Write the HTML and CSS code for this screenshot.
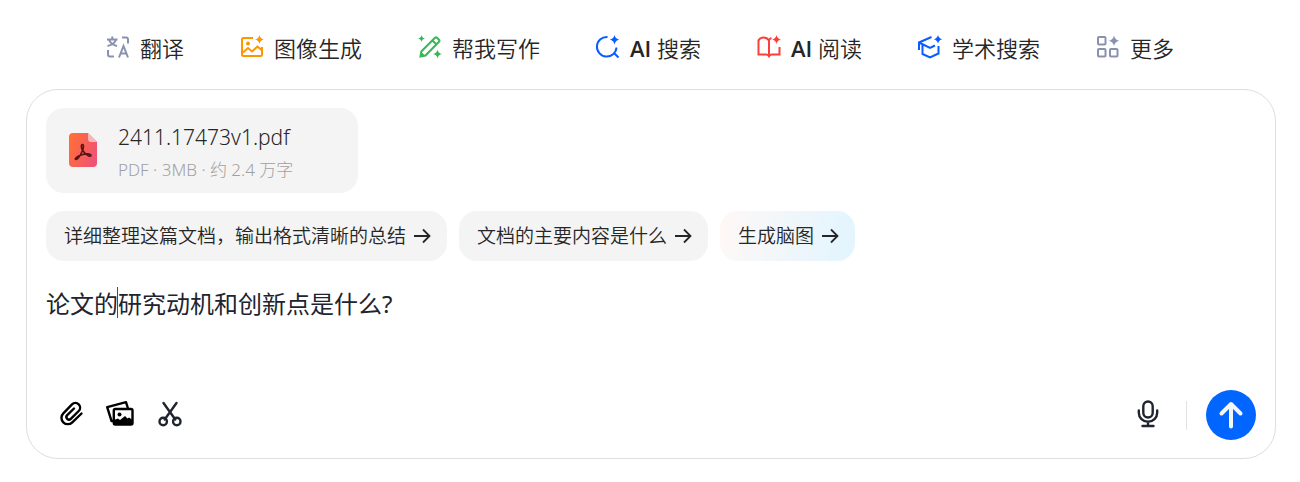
FILE: index.html
```html
<!DOCTYPE html>
<html lang="zh-CN">
<head>
<meta charset="utf-8">
<meta name="viewport" content="width=device-width, initial-scale=1">
<title>AI 助手</title>
<link rel="stylesheet" href="styles.css">
</head>
<body>
<main class="page">
  <nav class="skills" aria-label="技能">
    <button class="skill" type="button">
      <svg class="skill-icon gray" viewBox="0 0 24 24"><path d="M1 4.500h10.500M6.300 1.500v3M3 4.500c1 3.500 4 5.500 8 6.500M10 4.500c-1 3.500-4 5.500-8.500 6.500M16 2.500h4q2 0 2 2v4M2 15v4.500q0 2 2 2h4M13 22.500l4.500-11.500L22 22.500M15 18.500h5.500"/></svg>
      <span>翻译</span>
    </button>
    <button class="skill" type="button">
      <svg class="skill-icon orange" viewBox="0 0 24 24"><path d="M13 3H3.500Q2 3 2 4.500v15Q2 21 3.500 21h17q1.500 0 1.500-1.500V12M3 17.500l5-4.500 4 3.500 5.500-5 4 3.500"/><circle class="solid" cx="8" cy="8.500" r="2"/><path class="solid" d="M19.500 0q.8 3.700 4.500 4.500-3.700.8-4.500 4.500-.8-3.700-4.500-4.500 3.700-.8 4.500-4.500z"/></svg>
      <span>图像生成</span>
    </button>
    <button class="skill" type="button">
      <svg class="skill-icon green" viewBox="0 0 24 24"><path d="M2.500 21.500l.8-5L17 2.800q1-1 2 0l2 2q1 1 0 2L7.500 20.500zM14.500 5.500l4 4"/><path class="solid" d="M2.300 21.700l.8-5 4.200 4zM3.500 0q.5 3 3.500 3.500Q4 4 3.500 7 3 4 0 3.500 3 3 3.500 0zM19.500 14.500q.6 3.900 4.500 4.500-3.900.6-4.500 4.500-.6-3.900-4.500-4.500 3.900-.6 4.500-4.500z"/></svg>
      <span>帮我写作</span>
    </button>
    <button class="skill" type="button">
      <svg class="skill-icon blue" viewBox="0 0 24 24"><path d="M11.500 2a9.800 9.800 0 1 0 9 10.500M17.500 17.500l5 5"/><path class="solid" d="M18.500 0q.8 3.900 4.700 4.700-3.900.8-4.700 4.700-.8-3.900-4.700-4.700 3.900-.8 4.700-4.700z"/></svg>
      <span><b>AI</b> 搜索</span>
    </button>
    <button class="skill" type="button">
      <svg class="skill-icon red" viewBox="0 0 24 24"><path d="M12 20.500V5.500Q10 2.500 6.500 2.500T1.500 5.500V19.500h7.500q2 0 3 1.800 1-1.800 3-1.800h7.500V12M12 5q1-1.500 2.500-2"/><path class="solid" d="M19.500 0q.8 3.700 4.500 4.500-3.700.8-4.500 4.500-.8-3.700-4.500-4.500 3.700-.8 4.500-4.500z"/></svg>
      <span><b>AI</b> 阅读</span>
    </button>
    <button class="skill" type="button">
      <svg class="skill-icon blue" viewBox="0 0 24 24"><path d="M13.500 2L1 7.500V15M1 7.500L12 13l5-2.500M4.500 10v9l7.500 3.500 8.500-4V11"/><path class="solid" d="M20 0q.8 3.500 4.300 4.300-3.500.8-4.300 4.300-.8-3.500-4.300-4.300Q19.200 3.500 20 0z"/></svg>
      <span>学术搜索</span>
    </button>
    <button class="skill" type="button">
      <svg class="skill-icon gray" viewBox="0 0 24 24"><rect x="2" y="2" width="7.500" height="7.500" rx="1"/><rect x="2" y="14" width="7.500" height="7.500" rx="1"/><rect x="14" y="14" width="7.500" height="7.500" rx="1"/><path class="solid" d="M18 .5q.9 4.400 5.300 5.300-4.400.9-5.300 5.300-.9-4.400-5.300-5.300Q17.100 4.900 18 .5z"/></svg>
      <span>更多</span>
    </button>
  </nav>

  <form class="composer">
    <div class="file">
      <svg class="file-icon" viewBox="0 0 28 34">
        <defs><linearGradient id="pdf" x1="0" y1="0.3" x2="1" y2="0.7"><stop offset="0" stop-color="#ff6e38"/><stop offset="1" stop-color="#ef5377"/></linearGradient></defs>
        <path d="M4 0h15l9 9v21q0 4-4 4H4q-4 0-4-4V4q0-4 4-4z" fill="url(#pdf)"/>
        <path d="M19 0l9 9h-6q-3 0-3-3z" fill="#fbb5b4"/>
        <path d="M13.700 17.500c-1.700-3-1.800-6-.3-6s1.400 3-.1 6.500c-2 4.500-4.500 8.500-6.300 8.500s0-2.700 4.500-4.300c4-1.500 10.500-2 10.500 0s-4.500.8-8.300-4.700z" fill="none" stroke="#5b1414" stroke-width="1.600" stroke-linejoin="round"/>
      </svg>
      <div class="file-text">
        <div class="file-name">2411.17473v1.pdf</div>
        <div class="file-meta">PDF · 3MB · 约 2.4 万字</div>
      </div>
    </div>

    <div class="prompts">
      <button class="prompt" type="button">详细整理这篇文档，输出格式清晰的总结
        <svg class="arrow" viewBox="0 0 18 18"><path d="M1 9h15.500M10 2.500L16.500 9 10 15.500"/></svg></button>
      <button class="prompt" type="button">文档的主要内容是什么
        <svg class="arrow" viewBox="0 0 18 18"><path d="M1 9h15.500M10 2.500L16.500 9 10 15.500"/></svg></button>
      <button class="prompt mindmap" type="button">生成脑图
        <svg class="arrow" viewBox="0 0 18 18"><path d="M1 9h15.500M10 2.500L16.500 9 10 15.500"/></svg></button>
    </div>

    <div class="field">
      <textarea class="message" rows="2" aria-label="输入消息">论文的研究动机和创新点是什么?</textarea>
      <span class="caret"></span>
    </div>

    <div class="toolbar">
      <button class="tool" type="button" aria-label="添加附件">
        <svg class="tool-icon" viewBox="0 0 28 28"><path d="M24.500 13.500L15.300 22.300a6.300 6.300 0 0 1-9-9L15 4.300a4.700 4.700 0 0 1 6.700 6.700L13.800 18.800a2.500 2.500 0 0 1-3.600-3.600L17 8.500"/></svg>
      </button>
      <button class="tool" type="button" aria-label="添加图片">
        <svg class="tool-icon" viewBox="0 0 28 28"><path d="M5.500 21L1.200 7.200 20 2.200 21.700 7.500M5.500 21H7"/><rect x="7.800" y="9" width="18.700" height="15.500" rx="1.500"/><circle class="solid" cx="13.500" cy="14.500" r="2"/><path class="solid" d="M8 20l4-1.500 2 1.500 5-4 2.500 2.500 1.500-1 3.500 2.500v5H8z"/></svg>
      </button>
      <button class="tool" type="button" aria-label="截图">
        <svg class="tool-icon dark" viewBox="0 0 28 28"><path d="M7.500 3l11.800 16.500M20.500 3L8.700 19.500"/><circle cx="7.200" cy="21.500" r="3.700"/><circle cx="20.800" cy="21.500" r="3.700"/></svg>
      </button>
      <button class="tool mic" type="button" aria-label="语音输入">
        <svg class="tool-icon dark" viewBox="0 0 28 28"><rect x="9.300" y="1.500" width="9.400" height="16" rx="4.700"/><path d="M4.800 10.500v2.300a9.200 9 0 0 0 18.400 0v-2.300M14 21.800v4M8.500 26h11"/></svg>
      </button>
      <span class="divider"></span>
      <button class="send" type="submit" aria-label="发送">
        <svg class="send-icon" viewBox="0 0 28 28"><path d="M14 25.500V3M4.500 12.500L14 3l9.500 9.500"/></svg>
      </button>
    </div>
  </form>
</main>
</body>
</html>
```
FILE: styles.css
```css
* {
  box-sizing: border-box;
}

body {
  margin: 0;
  background: #fff;
  color: #262626;
  font-family: "Noto Sans", "Noto Sans CJK SC", sans-serif;
}

button {
  padding: 0;
  border: 0;
  background: none;
  color: inherit;
  font: inherit;
  cursor: pointer;
}

svg {
  flex: none;
  overflow: visible;
}

.page {
  padding: 32px 24px 23px 26px;
}

.skills {
  display: flex;
  gap: 56px;
  padding-left: 80px;
}

.skill {
  display: flex;
  align-items: center;
  gap: 10px;
  font-size: 22px;
  font-weight: 350;
  line-height: 32px;
  white-space: nowrap;
}

.skill b {
  font-family: "Open Sans", sans-serif;
  font-weight: 600;
}

.skill-icon {
  width: 24px;
  height: 24px;
  margin-bottom: 2px;
  fill: none;
  stroke: currentColor;
  stroke-width: 2;
}

.solid {
  fill: currentColor;
  stroke: none;
}

.gray { color: #8a91b0; }
.orange { color: #ff9500; }
.green { color: #34b955; }
.blue { color: #0a5cff; }
.red { color: #f93f37; }

.composer {
  display: flex;
  flex-direction: column;
  gap: 18px;
  margin-top: 25px;
  padding: 18px 19px;
  border: 1px solid #dedede;
  border-radius: 32px;
}

.file {
  display: flex;
  align-items: center;
  align-self: flex-start;
  gap: 21px;
  min-width: 312px;
  padding: 12px 23px 7px;
  border-radius: 18px;
  background: #f4f4f4;
}

.file-icon {
  width: 28px;
  height: 34px;
  margin-bottom: 6px;
}

.file-name {
  font-size: 21px;
  font-weight: 350;
  line-height: 34px;
}

.file-meta {
  color: #a0a0a0;
  font-size: 17px;
  font-weight: 300;
  line-height: 32px;
}

.prompts {
  display: flex;
  gap: 12px;
}

.prompt {
  display: flex;
  align-items: center;
  gap: 7px;
  padding: 0 16px 0 18px;
  border-radius: 18px;
  background: #f4f4f4;
  font-size: 19px;
  font-weight: 350;
  line-height: 50px;
  white-space: nowrap;
}

.mindmap {
  background: linear-gradient(100deg, #fff8f6, #e4f5fe 90%);
}

.arrow {
  width: 18px;
  height: 18px;
  fill: none;
  stroke: currentColor;
  stroke-width: 1.8;
}

.field {
  position: relative;
  padding-top: 6px;
}

.message {
  display: block;
  width: 100%;
  padding: 0;
  border: 0;
  outline: 0;
  background: none;
  color: #20242e;
  font: 400 24px/38px "Noto Sans", "Noto Sans CJK SC", sans-serif;
  resize: none;
  overflow: hidden;
}

.caret {
  position: absolute;
  top: 8px;
  left: 71px;
  width: 1px;
  height: 31px;
  background: #2050c0;
}

.toolbar {
  display: flex;
  align-items: center;
  margin-top: 11px;
}

.tool {
  display: flex;
  align-items: center;
  justify-content: center;
  width: 50px;
  height: 50px;
  padding-bottom: 2px;
  color: #000;
}

.tool:first-child {
  width: 49px;
}

.tool-icon {
  width: 28px;
  height: 28px;
  fill: none;
  stroke: currentColor;
  stroke-width: 2.4;
  stroke-linecap: round;
  stroke-linejoin: round;
}

.dark {
  color: #20242e;
}

.mic {
  margin-left: auto;
}

.divider {
  width: 1px;
  height: 29px;
  margin: 0 19px 0 13px;
  background: #e2e2e2;
}

.send {
  display: flex;
  align-items: center;
  justify-content: center;
  width: 50px;
  height: 50px;
  border-radius: 50%;
  background: #06f;
  color: #f4f6fa;
}

.send-icon {
  width: 28px;
  height: 28px;
  fill: none;
  stroke: currentColor;
  stroke-width: 4;
  stroke-linecap: round;
  stroke-linejoin: round;
}
```
